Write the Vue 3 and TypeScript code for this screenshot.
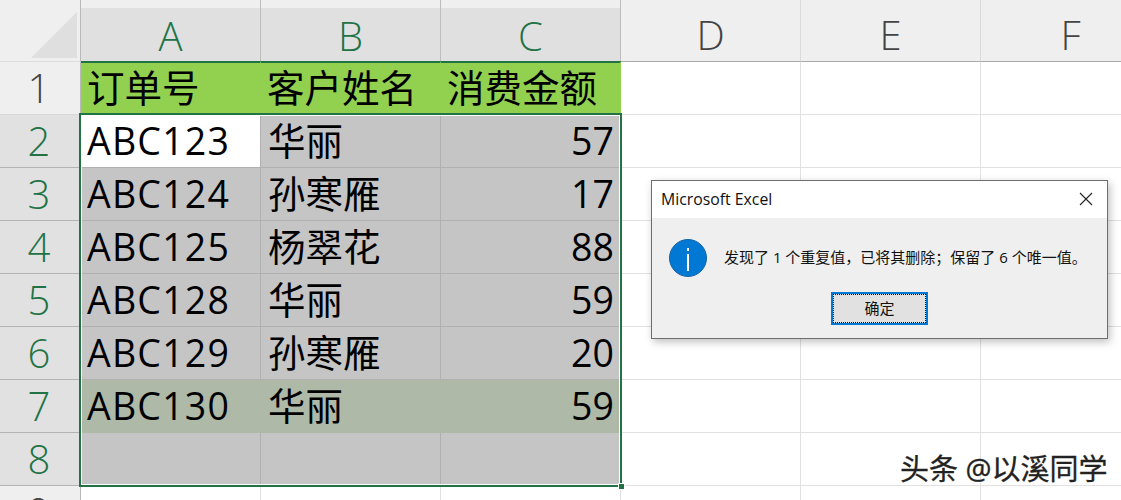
<script setup lang="ts">
const columns = ['A', 'B', 'C', 'D', 'E', 'F']
const rows = [
  ['订单号', '客户姓名', '消费金额'],
  ['ABC123', '华丽', '57'],
  ['ABC124', '孙寒雁', '17'],
  ['ABC125', '杨翠花', '88'],
  ['ABC128', '华丽', '59'],
  ['ABC129', '孙寒雁', '20'],
  ['ABC130', '华丽', '59'],
  ['', '', ''],
  ['', '', ''],
]
function cellClass(r: number, c: number): string[] {
  const out: string[] = []
  if (c === 2 && r > 0) out.push('num')
  if (c === 0 && r > 0) out.push('code')
  if (c > 2) return out
  if (r === 0) out.push('head')
  else if (r === 1 && c === 0) out.push('active')
  else if (r === 6) out.push('dup')
  else if (r >= 1 && r <= 7) out.push('sel')
  return out
}
</script>

<template>
  <div class="sheet">
    <div class="grid">
      <div class="corner">
        <svg width="46" height="46" viewBox="0 0 46 46"><path d="M46 0V46H0Z" fill="#dfdfdf" /></svg>
      </div>
      <div v-for="(col, i) in columns" :key="col" class="colhead" :class="{ on: i < 3 }">{{ col }}</div>
      <template v-for="(row, r) in rows" :key="r">
        <div class="rowhead" :class="{ on: r >= 1 && r <= 7 }">{{ r + 1 }}</div>
        <div
          v-for="c in 6"
          :key="c"
          class="cell"
          :class="cellClass(r, c - 1)"
        >{{ row[c - 1] }}</div>
      </template>
    </div>
    <div class="selection"><i class="handle"></i></div>
    <div class="dialog">
      <div class="title">
        <span>Microsoft Excel</span>
        <svg width="14" height="14" viewBox="0 0 14 14"><path d="M1 1L13 13M13 1L1 13" stroke="#222" stroke-width="1.1" fill="none" /></svg>
      </div>
      <div class="body">
        <div class="message">
          <svg width="38" height="38" viewBox="0 0 38 38">
            <circle cx="19" cy="19" r="18.5" fill="#0078d4" stroke="#1464a8" stroke-width="1" />
            <rect x="18" y="15" width="2" height="17" fill="#fff" />
            <rect x="18" y="9" width="2" height="3" fill="#fff" />
          </svg>
          <span class="text">发现了 1 个重复值，已将其删除；保留了 6 个唯一值。</span>
        </div>
        <button class="ok" type="button"><span>确定</span></button>
      </div>
    </div>
    <div class="mark">头条 @以溪同学</div>
  </div>
</template>

<style>
html, body { margin: 0; background: #fff; }
</style>

<style scoped>
.sheet {
  position: relative;
  width: 1121px;
  height: 500px;
  overflow: hidden;
  background: #fff;
  font-family: "Open Sans", "Noto Sans CJK SC", sans-serif;
}
.grid {
  display: grid;
  grid-template-columns: 81px repeat(6, 180px);
  grid-template-rows: 62px repeat(9, 53px);
}
.corner {
  background: #efefef;
  border-right: 1px solid #b9b9b9;
  border-bottom: 1px solid #dcdcdc;
  display: flex;
  align-items: flex-end;
  justify-content: flex-end;
  padding: 0 3px 3px 0;
  box-sizing: border-box;
}
.colhead {
  box-sizing: border-box;
  background: #efefef;
  border-right: 1px solid #dadada;
  border-bottom: 1px solid #ababab;
  color: #444;
  font: 350 40px/1 "Open Sans", "Liberation Sans", sans-serif;
  display: flex;
  align-items: flex-end;
  justify-content: center;
  padding-bottom: 6px;
}
.colhead.on {
  background: linear-gradient(#efefef 8px, #e0e0e0 8px);
  border-right-color: #bdbdbd;
  color: #217346;
  border-bottom: 0;
}
.rowhead {
  box-sizing: border-box;
  background: #efefef;
  border-right: 1px solid #b9b9b9;
  border-bottom: 1px solid #d8d8d8;
  color: #444;
  font: 350 40px/1 "Open Sans", "Liberation Sans", sans-serif;
  display: flex;
  align-items: center;
  justify-content: center;
  padding-right: 2px;
}
.rowhead.on {
  background: #e1e1e1;
  color: #217346;
  border-bottom-color: #b4b4b4;
}
.cell {
  box-sizing: border-box;
  border-right: 1px solid #e1e1e1;
  border-bottom: 1px solid #e1e1e1;
  font-size: 37.5px;
  line-height: 52px;
  color: #000;
  padding: 0 6px 0 7px;
  white-space: nowrap;
  overflow: hidden;
}
.cell.code { letter-spacing: 1.2px; padding-left: 6px; }
.cell.num { text-align: right; }
.cell.head {
  background: #92d050;
  border-top: 2px solid #217346;
  border-right-color: #92d050;
  border-bottom-color: #92d050;
  line-height: 50px;
  padding-left: 6px;
  margin-top: -1px;
  height: 54px;
}
.cell.sel {
  background: #c5c5c5;
  border-right-color: #b0b0b0;
  border-bottom-color: #b0b0b0;
}
.cell.active {
  background: #fff;
  border-right-color: #b0b0b0;
  border-bottom-color: #b0b0b0;
}
.cell.dup {
  background: #aeb9a7;
  border-right-color: #aeb9a7;
  border-bottom-color: #aeb9a7;
}
.selection {
  position: absolute;
  left: 79px;
  top: 113px;
  width: 539px;
  height: 370px;
  border: 2px solid #217346;
  outline: 1px solid #fff;
  outline-offset: -3px;
}
.handle {
  position: absolute;
  right: -5px;
  bottom: -5px;
  width: 5px;
  height: 5px;
  background: #217346;
  border: 1px solid #fff;
}
.dialog {
  position: absolute;
  left: 651px;
  top: 180px;
  width: 455px;
  height: 157px;
  border: 1px solid #6e6e6e;
  box-shadow: 2px 3px 8px rgba(0, 0, 0, 0.25);
  background: #efefef;
  display: flex;
  flex-direction: column;
}
.title {
  height: 35px;
  padding: 0 14px 2px 9px;
  background: #fff;
  display: flex;
  align-items: center;
  justify-content: space-between;
  font: 15.8px "Open Sans", "Liberation Sans", sans-serif;
  color: #111;
}
.body {
  flex: 1;
  display: flex;
  flex-direction: column;
  align-items: center;
}
.message {
  align-self: stretch;
  display: flex;
  align-items: center;
  gap: 17px;
  padding: 21px 0 0 17px;
  font-size: 15px;
  line-height: 38px;
  color: #111;
  white-space: nowrap;
}
.text { margin-top: -2px; }
.ok {
  margin-top: 15px;
  width: 97px;
  height: 33px;
  box-sizing: border-box;
  border: 2px solid #0078d4;
  background: #e1e1e1;
  padding: 0 0 2px;
  font: 15px/1 "Noto Sans CJK SC", sans-serif;
  color: #111;
  position: relative;
}
.ok::after {
  content: "";
  position: absolute;
  inset: 0;
  border: 1px dotted #111;
}
.mark {
  position: absolute;
  left: 900px;
  top: 451px;
  font-size: 29px;
  line-height: 36px;
  color: #222;
  white-space: nowrap;
  text-shadow: 1px 1px 0 #fff;
  -webkit-text-stroke: 0.3px #222;
}
</style>
